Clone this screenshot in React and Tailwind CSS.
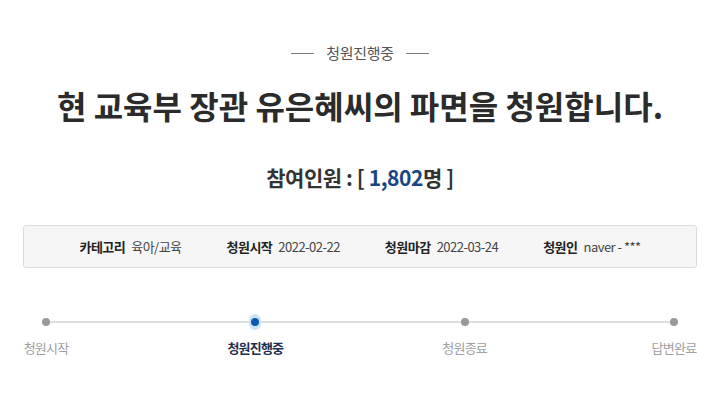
import React from 'react';

const font = { fontFamily: '"Noto Sans CJK KR", "Noto Sans", sans-serif' };

const infoItems = [
  { label: '카테고리', value: '육아/교육' },
  { label: '청원시작', value: '2022-02-22' },
  { label: '청원마감', value: '2022-03-24' },
  { label: '청원인', value: 'naver - ***' },
];

const steps = [
  { label: '청원시작', active: false },
  { label: '청원진행중', active: true },
  { label: '청원종료', active: false },
  { label: '답변완료', active: false },
];

export default function App() {
  return (
    <div className="w-[720px] h-[405px] bg-white overflow-hidden text-[#333]" style={font}>
      {/* status label */}
      <div className="pt-[41px] h-[67px] flex items-start justify-center gap-3">
        <span className="w-[23px] h-px bg-[#777] mt-[12px]" />
        <span className="text-[15px] leading-[24px] text-[#555] tracking-[-0.02em]">청원진행중</span>
        <span className="w-[23px] h-px bg-[#777] mt-[12px]" />
      </div>

      {/* title */}
      <h1 className="h-[76px] text-center text-[32px] leading-[76px] font-bold text-[#2b2b2b]">
        현 교육부 장관 유은혜씨의 파면을 청원합니다.
      </h1>

      {/* participants */}
      <div className="mt-[20px] text-center text-[21px] leading-[28px] font-bold text-[#333] tracking-[-0.02em]">
        참여인원 : [ <span className="text-[#1b4685]">1,802</span>명 ]
      </div>

      {/* info box */}
      <div className="mx-[23px] mt-[34px] h-[43px] bg-[#f6f6f6] border border-[#dcdcdc] rounded-[3px] flex items-center justify-center gap-[45px] text-[13px] tracking-[-0.04em]">
        {infoItems.map((item) => (
          <div key={item.label} className="flex items-center gap-[6px]">
            <span className="font-bold text-[#222]">{item.label}</span>
            <span className="text-[#444]">{item.value}</span>
          </div>
        ))}
      </div>

      {/* progress */}
      <div className="relative mx-[23px] mt-[48px]">
        <div className="absolute left-[22px] right-[24px] top-[5px] h-[2px] bg-[#dedede]" />
        <div className="relative flex justify-between">
          {steps.map((s) => (
            <div key={s.label} className="w-[46px] flex flex-col items-center">
              <div className="h-[12px] w-[12px] flex items-center justify-center">
                {s.active ? (
                  <div className="h-[16px] w-[16px] rounded-full bg-[#cfe3f7] flex items-center justify-center">
                    <div className="h-[8px] w-[8px] rounded-full bg-[#0b5aad]" />
                  </div>
                ) : (
                  <div className="h-[8px] w-[8px] rounded-full bg-[#999]" />
                )}
              </div>
              <div
                className={
                  'mt-[10px] whitespace-nowrap text-[13px] leading-[20px] tracking-[-0.06em] ' +
                  (s.active ? 'font-bold text-[#1e3050]' : 'text-[#a0a0a0]')
                }
              >
                {s.label}
              </div>
            </div>
          ))}
        </div>
      </div>
    </div>
  );
}
